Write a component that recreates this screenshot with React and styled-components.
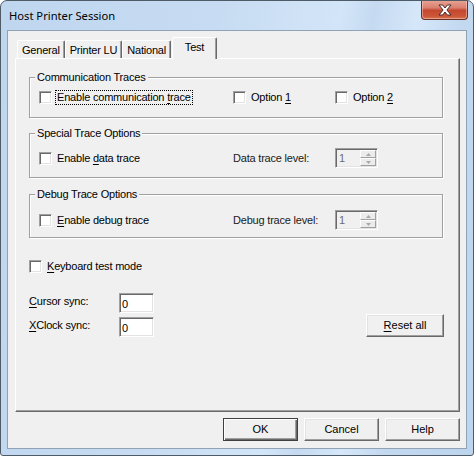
import React from 'react';
import styled, { createGlobalStyle } from 'styled-components';

const Global = createGlobalStyle`
  html, body { margin: 0; padding: 0; background: #ffffff; }
  body { width: 474px; height: 456px; overflow: hidden; }
  *, *::before, *::after { box-sizing: border-box; }
`;

const Window = styled.div`
  width: 474px;
  height: 456px;
  border: 1px solid #505b68;
  border-radius: 7px 7px 3px 3px;
  background: linear-gradient(100deg, #bfd6ef 0%, #c7dcf2 40%, #d3e5f8 62%, #c5daf1 68%, #d6e7f9 76%, #c3d9f0 84%, #bcd4ee 100%);
  display: flex;
  flex-direction: column;
  overflow: hidden;
  font-family: "Liberation Sans", Arial, sans-serif;
  font-size: 11px;
  letter-spacing: -0.2px;
  color: #000;
`;

const TitleBar = styled.div`
  height: 29px;
  flex: none;
  display: flex;
  align-items: center;
  padding-left: 8px;
`;

const Title = styled.div`
  flex: 1;
  font-family: "Noto Sans", "Liberation Sans", sans-serif;
  font-size: 11.2px;
  letter-spacing: 0;
  color: #000;
  padding-bottom: 1px;
`;

const CloseButton = styled.div`
  align-self: flex-start;
  margin-top: -1px;
  margin-right: 5px;
  width: 47px;
  height: 20px;
  border: 1px solid #6b2f28;
  border-top: none;
  border-radius: 0 0 4px 4px;
  background: linear-gradient(to bottom, #eaa596 0%, #d98170 40%, #c4472f 55%, #cc5639 85%, #d6734f 100%);
  box-shadow: inset 0 0 0 1px rgba(255, 220, 210, 0.45);
  display: flex;
  align-items: center;
  justify-content: center;
`;

const Client = styled.div`
  flex: 1;
  margin: 0 6px 6px;
  border: 1px solid #8fa2b6;
  background: #f0f0f0;
  padding: 6px 6px 7px 7px;
  display: flex;
  flex-direction: column;
`;

const TabStrip = styled.div`
  height: 21px;
  flex: none;
  display: flex;
  align-items: flex-end;
  padding-left: 2px;
  position: relative;
  z-index: 1;
`;

const Tab = styled.div`
  height: ${p => (p.$active ? 22 : 18)}px;
  min-width: ${p => (p.$active ? 45 : 0)}px;
  margin-bottom: ${p => (p.$active ? -1 : 0)}px;
  margin-left: ${p => (p.$active ? 1 : 0)}px;
  padding: 0 4px ${p => (p.$active ? 3 : 0)}px;
  display: flex;
  align-items: center;
  justify-content: center;
  background: #f0f0f0;
  border-top: 1px solid #ffffff;
  border-left: 1px solid #ffffff;
  border-right: 1px solid #696969;
  border-radius: 2px 2px 0 0;
  box-shadow: inset -1px 0 0 #a0a0a0;
  white-space: nowrap;
`;

const Panel = styled.div`
  flex: 1;
  border: 1px solid;
  border-color: #ffffff #696969 #696969 #ffffff;
  box-shadow: inset -1px -1px 0 #a0a0a0;
  padding: 12px 0 0 13px;
  display: flex;
  flex-direction: column;
  align-items: flex-start;
`;

const Group = styled.fieldset`
  width: 414px;
  margin: ${p => p.$mt || 0}px 0 0;
  padding: 0;
  min-width: 0;
  border: 1px solid #a0a0a0;
  box-shadow: 1px 1px 0 #ffffff, inset 1px 1px 0 #ffffff;
`;

const Legend = styled.legend`
  margin-left: 5px;
  padding: 0 2px;
  line-height: 13px;
  background: #f0f0f0;
`;

const GroupRow = styled.div`
  display: grid;
  grid-template-columns: 194px 102px auto;
  align-items: center;
  min-height: ${p => p.$h}px;
  padding: ${p => p.$pt}px 0 ${p => p.$pb}px 9px;
`;

const CheckItem = styled.div`
  display: flex;
  align-items: center;
  height: 15px;
  margin-top: ${p => p.$mt || 0}px;
`;

const Box = styled.span`
  width: 13px;
  height: 13px;
  flex: none;
  margin-right: 5px;
  background: #ffffff;
  border: 1px solid;
  border-color: #a0a0a0 #ffffff #ffffff #a0a0a0;
  box-shadow: inset 1px 1px 0 #696969, inset -1px -1px 0 #e3e3e3;
`;

const Text = styled.span`
  line-height: 13px;
  padding: 0 1px;
  margin-left: -1px;
  white-space: nowrap;
  outline: ${p => (p.$focus ? '1px dotted #000' : 'none')};
  outline-offset: 0;
`;

const U = styled.span`
  text-decoration: underline;
  text-underline-offset: 2px;
`;

const LevelLabel = styled.span`
  white-space: nowrap;
  color: #1a1a1a;
`;

const Spin = styled.div`
  width: 43px;
  height: 20px;
  display: flex;
  background: #f0f0f0;
  border: 1px solid;
  border-color: #a0a0a0 #ffffff #ffffff #a0a0a0;
  box-shadow: inset 1px 1px 0 #696969, inset -1px -1px 0 #e3e3e3;
  padding: 1px;
`;

const SpinValue = styled.span`
  flex: 1;
  color: #6d6d6d;
  padding: 2px 0 0 2px;
  line-height: 13px;
`;

const SpinButtons = styled.div`
  width: 16px;
  display: flex;
  flex-direction: column;
`;

const SpinButton = styled.div`
  flex: 1;
  display: flex;
  align-items: center;
  justify-content: center;
  background: #ececec;
  border: 1px solid;
  border-color: #ffffff #a0a0a0 #a0a0a0 #ffffff;
`;

const SyncArea = styled.div`
  width: 415px;
  margin-top: 19px;
  display: flex;
  justify-content: space-between;
  align-items: flex-end;
`;

const SyncGrid = styled.div`
  display: grid;
  grid-template-columns: 90px 35px;
  row-gap: 4px;
  align-items: center;
`;

const FieldLabel = styled.span`
  white-space: nowrap;
  padding-bottom: 4px;
`;

const Field = styled.input`
  width: 35px;
  height: 20px;
  margin: 0;
  padding: 1px 0 0 2px;
  font: inherit;
  letter-spacing: 0;
  color: #000;
  background: #ffffff;
  border: 1px solid;
  border-color: #a0a0a0 #ffffff #ffffff #a0a0a0;
  box-shadow: inset 1px 1px 0 #696969, inset -1px -1px 0 #e3e3e3;
  outline: none;
`;

const Button = styled.button`
  width: ${p => p.$w || 75}px;
  height: 23px;
  margin: 0;
  padding: 0 0 1px;
  font: inherit;
  letter-spacing: 0;
  color: #000;
  background: #f0f0f0;
  border: 1px solid;
  border-color: ${p => (p.$default ? '#404040' : '#ffffff #696969 #696969 #ffffff')};
  box-shadow: ${p =>
    p.$default
      ? 'inset 1px 1px 0 #ffffff, inset -1px -1px 0 #696969, inset -2px -2px 0 #a0a0a0'
      : 'inset -1px -1px 0 #a0a0a0, inset 1px 1px 0 #e3e3e3'};
  display: flex;
  align-items: center;
  justify-content: center;
`;

const ButtonRow = styled.div`
  flex: none;
  margin-top: 6px;
  display: flex;
  justify-content: flex-end;
  gap: 6px;
`;

const CloseIcon = () => (
  <svg width="14" height="12" viewBox="-1 -1 14 12">
    <polygon
      points="0,0 3.6,0 6,3 8.4,0 12,0 7.9,5 12,10 8.4,10 6,7 3.6,10 0,10 4.1,5"
      fill="#ffffff"
      stroke="#4b2a28"
      strokeWidth="1"
      strokeLinejoin="round"
    />
  </svg>
);

const Arrow = ({ up }) => (
  <svg width="5" height="3" viewBox="0 0 5 3">
    <polygon points={up ? '2.5,0 5,3 0,3' : '0,0 5,0 2.5,3'} fill="#a8a8a8" />
  </svg>
);

const SpinBox = ({ value }) => (
  <Spin>
    <SpinValue>{value}</SpinValue>
    <SpinButtons>
      <SpinButton><Arrow up /></SpinButton>
      <SpinButton><Arrow /></SpinButton>
    </SpinButtons>
  </Spin>
);

const Check = ({ children, focus, mt }) => (
  <CheckItem $mt={mt}>
    <Box />
    <Text $focus={focus}>{children}</Text>
  </CheckItem>
);

export default function App() {
  return (
    <>
      <Global />
      <Window>
        <TitleBar>
          <Title>Host Printer Session</Title>
          <CloseButton><CloseIcon /></CloseButton>
        </TitleBar>
        <Client>
          <TabStrip>
            <Tab>General</Tab>
            <Tab>Printer LU</Tab>
            <Tab>National</Tab>
            <Tab $active>Test</Tab>
          </TabStrip>
          <Panel>
            <Group>
              <Legend>Communication Traces</Legend>
              <GroupRow $h={15} $pt={6} $pb={12}>
                <Check focus>Enable communication <U>t</U>race</Check>
                <Check>Option <U>1</U></Check>
                <Check>Option <U>2</U></Check>
              </GroupRow>
            </Group>
            <Group $mt={9}>
              <Legend>Special Trace Options</Legend>
              <GroupRow $h={20} $pt={8} $pb={9}>
                <Check>Enable <U>d</U>ata trace</Check>
                <LevelLabel>Data trace level:</LevelLabel>
                <SpinBox value="1" />
              </GroupRow>
            </Group>
            <Group $mt={10}>
              <Legend>Debug Trace Options</Legend>
              <GroupRow $h={20} $pt={9} $pb={7}>
                <Check><U>E</U>nable debug trace</Check>
                <LevelLabel>Debug trace level:</LevelLabel>
                <SpinBox value="1" />
              </GroupRow>
            </Group>
            <Check mt={21}><U>K</U>eyboard test mode</Check>
            <SyncArea>
              <SyncGrid>
                <FieldLabel><U>C</U>ursor sync:</FieldLabel>
                <Field defaultValue="0" readOnly />
                <FieldLabel><U>X</U>Clock sync:</FieldLabel>
                <Field defaultValue="0" readOnly />
              </SyncGrid>
              <Button $w={78}><span><U>R</U>eset all</span></Button>
            </SyncArea>
          </Panel>
          <ButtonRow>
            <Button $default>OK</Button>
            <Button>Cancel</Button>
            <Button>Help</Button>
          </ButtonRow>
        </Client>
      </Window>
    </>
  );
}
